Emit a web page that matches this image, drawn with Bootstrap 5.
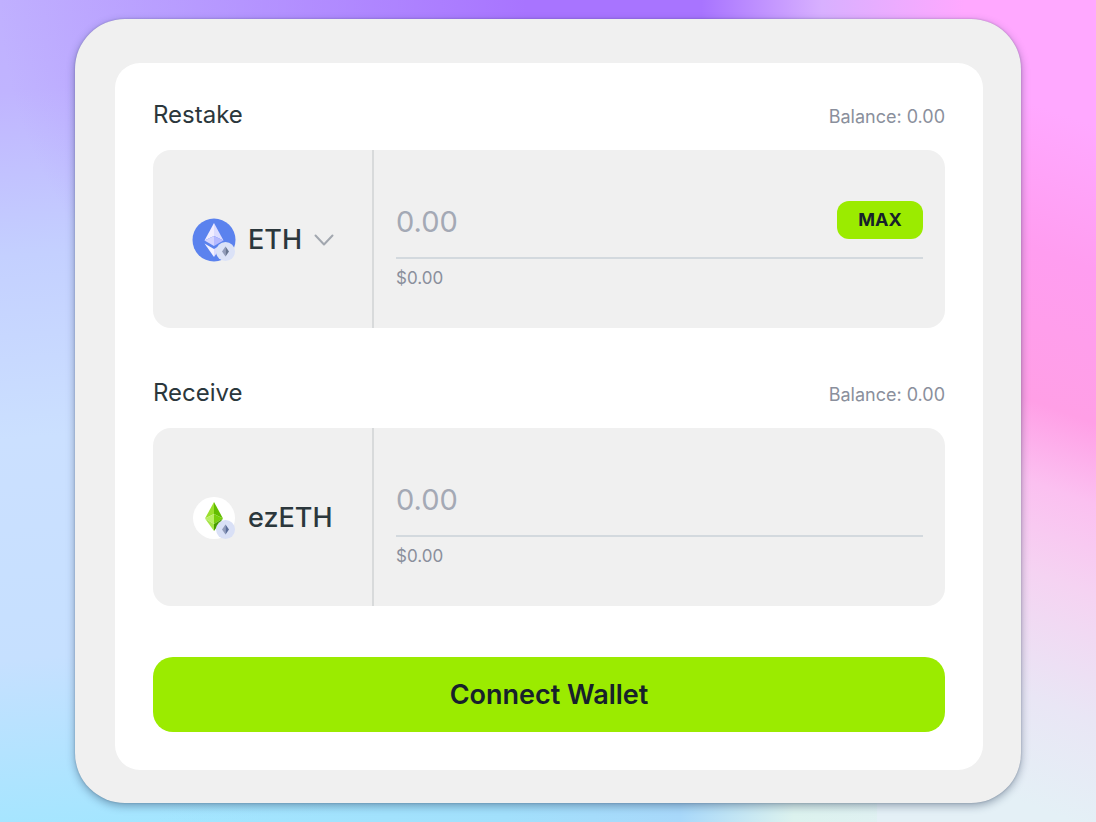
<!DOCTYPE html>
<html lang="en">
<head>
<meta charset="utf-8">
<meta name="viewport" content="width=device-width, initial-scale=1">
<title>Restake</title>
<link rel="stylesheet" href="https://cdn.jsdelivr.net/npm/bootstrap@5.3.0/dist/css/bootstrap.min.css">
<style>
  :root { --ink: #2b373c; --lime: #9beb00; --panel: #f0f0f0; --muted: #8a8f9c; }
  body {
    font-family: Inter, "Liberation Sans", sans-serif;
    color: var(--ink);
    background:
      linear-gradient(90deg, rgba(216,176,255,0) 64%, #d8b0ff 75%, #ffa8ff 88%) top / 100% 40px no-repeat,
      linear-gradient(200deg, #ffa8ff 0%, #ffa8ff 14%, #ff9df0 30%, #ff9fe6 47%, #fbc0f0 56%, #f5d3f2 66%, #e9e6f5 80%, #e4f0f6 92%) right / 20% 100% no-repeat,
      radial-gradient(ellipse 60% 60% at 60% 0%, #a874ff 20%, rgba(168,116,255,0) 100%),
      linear-gradient(90deg, rgba(162,224,252,0) 5%, #a2e0fc 45%, #a8d8fa 65%, #dcf2ee 78%, #e4f0f6 100%) bottom / 80% 60px no-repeat,
      linear-gradient(175deg, #c0b0ff 0%, #c0b4ff 10%, #c4d0ff 28%, #cbe0ff 48%, #c6e0ff 72%, #a2e6ff 92%);
  }
  .shell { width: calc(100% - 150px); background: var(--panel); border-radius: 50px; padding: 44px 38px 33px 40px; box-shadow: 0 3px 8px rgba(30,50,80,.4), 0 0 2px rgba(30,50,80,.3); }
  .sheet { border-radius: 25px; padding: 38px; }
  .heading-row { margin-bottom: 21px; }
  .title { font-size: 24px; line-height: 28px; }
  .balance { font-size: 18px; line-height: 24px; color: var(--muted); }
  .field { background: var(--panel); border-radius: 18px; min-height: 178px; }
  .token { width: 221px; border-right: 2px solid #d8dadb; padding: 2px 0 0 39px; gap: 12px; }
  .token-name { font-size: 27px; line-height: 32px; font-weight: 500; }
  .picker { border: 0; background: none; color: inherit; gap: 12px; }
  .amounts { min-width: 0; padding: 0 22px; }
  .amount-row { height: 76px; border-bottom: 2px solid #d3d9de; }
  .amount { min-width: 0; border: 0; outline: 0; padding: 4px 0 0; background: none; font-size: 29px; line-height: 36px; color: var(--ink); }
  .amount::placeholder { color: #a4a9b5; opacity: 1; }
  .fiat { font-size: 17px; line-height: 24px; color: var(--muted); padding: 7px 0 5px; }
  .max-btn, .connect-btn { border: 0; background: var(--lime); color: #17212b; }
  .max-btn { width: 86px; height: 38px; border-radius: 12px; font-size: 18px; font-weight: 700; line-height: 24px; }
  .connect-btn { height: 75px; border-radius: 20px; font-size: 27px; font-weight: 600; line-height: 32px; }
  .second, .cta { margin-top: 51px; }
</style>
</head>
<body class="min-vh-100 d-flex align-items-center justify-content-center">
<main class="shell">
  <form class="sheet bg-white">
    <section>
      <div class="heading-row d-flex justify-content-between align-items-end">
        <label class="title" for="restake">Restake</label>
        <span class="balance">Balance: 0.00</span>
      </div>
      <div class="field d-flex">
        <div class="token d-flex align-items-center flex-shrink-0">
          <button type="button" class="picker d-flex align-items-center p-0" aria-label="Choose token, ETH">
            <svg width="44" height="44" viewBox="0 0 44 44" aria-hidden="true">
              <circle cx="22" cy="22" r="21.500" fill="#5b82ee"/>
              <path d="M22 5 12.500 22.500 22 18z" fill="#f1edff"/><path d="M22 5v13l9.500 4.500z" fill="#dcdcff"/>
              <path d="M12.500 22.500 22 18v10z" fill="#d4d4ff"/><path d="M22 18v10l9.500-5.500z" fill="#b5b9ff"/>
              <path d="M12.500 25.500 22 31v8z" fill="#f4f2ff"/><path d="M22 31v8l9.500-13.500z" fill="#dcdcff"/>
              <circle cx="33.500" cy="33.500" r="9.500" fill="#dbe2f7"/>
              <path d="M33.500 28.500 30 33.500 33.500 38.500z" fill="#929cba"/><path d="M33.500 28.500v10l3.500-5z" fill="#687590"/>
            </svg>
            <span class="token-name">ETH</span>
            <svg width="20" height="12" viewBox="0 0 20 12" fill="none" stroke="#a2a7af" stroke-width="2" stroke-linecap="round" stroke-linejoin="round" aria-hidden="true"><path d="m1.500 1.500 8.500 9 8.500-9"/></svg>
          </button>
        </div>
        <div class="amounts flex-grow-1 d-flex flex-column justify-content-center">
          <div class="amount-row d-flex align-items-center">
            <input id="restake" class="amount flex-grow-1" type="text" inputmode="decimal" placeholder="0.00">
            <button type="button" class="max-btn flex-shrink-0">MAX</button>
          </div>
          <div class="fiat">$0.00</div>
        </div>
      </div>
    </section>
    <section class="second">
      <div class="heading-row d-flex justify-content-between align-items-end">
        <label class="title" for="receive">Receive</label>
        <span class="balance">Balance: 0.00</span>
      </div>
      <div class="field d-flex">
        <div class="token d-flex align-items-center flex-shrink-0">
          <svg width="44" height="44" viewBox="0 0 44 44" aria-hidden="true">
            <circle cx="22" cy="22" r="21" fill="#fff"/>
            <path d="M22 6 13 22.500 22 18z" fill="#9bdf2c"/><path d="M22 6v12l9 4.500z" fill="#62bd00"/>
            <path d="M13 22.500 22 18v10z" fill="#b9ee63"/><path d="M22 18v10l9-5.500z" fill="#78cf0c"/>
            <path d="M13 22.500 22 28v7z" fill="#a5e547"/><path d="M22 28v7l9-12.500z" fill="#469b00"/>
            <circle cx="33.500" cy="33.500" r="9.500" fill="#d9e0f6"/>
            <path d="M33.500 28.500 30 33.500 33.500 38.500z" fill="#929cba"/><path d="M33.500 28.500v10l3.500-5z" fill="#5b6d99"/>
          </svg>
          <span class="token-name">ezETH</span>
        </div>
        <div class="amounts flex-grow-1 d-flex flex-column justify-content-center">
          <div class="amount-row d-flex align-items-center">
            <input id="receive" class="amount flex-grow-1" type="text" placeholder="0.00" readonly>
          </div>
          <div class="fiat">$0.00</div>
        </div>
      </div>
    </section>
    <button type="button" class="connect-btn cta w-100">Connect Wallet</button>
  </form>
</main>
<script src="https://cdn.jsdelivr.net/npm/bootstrap@5.3.0/dist/js/bootstrap.bundle.min.js"></script>
</body>
</html>
